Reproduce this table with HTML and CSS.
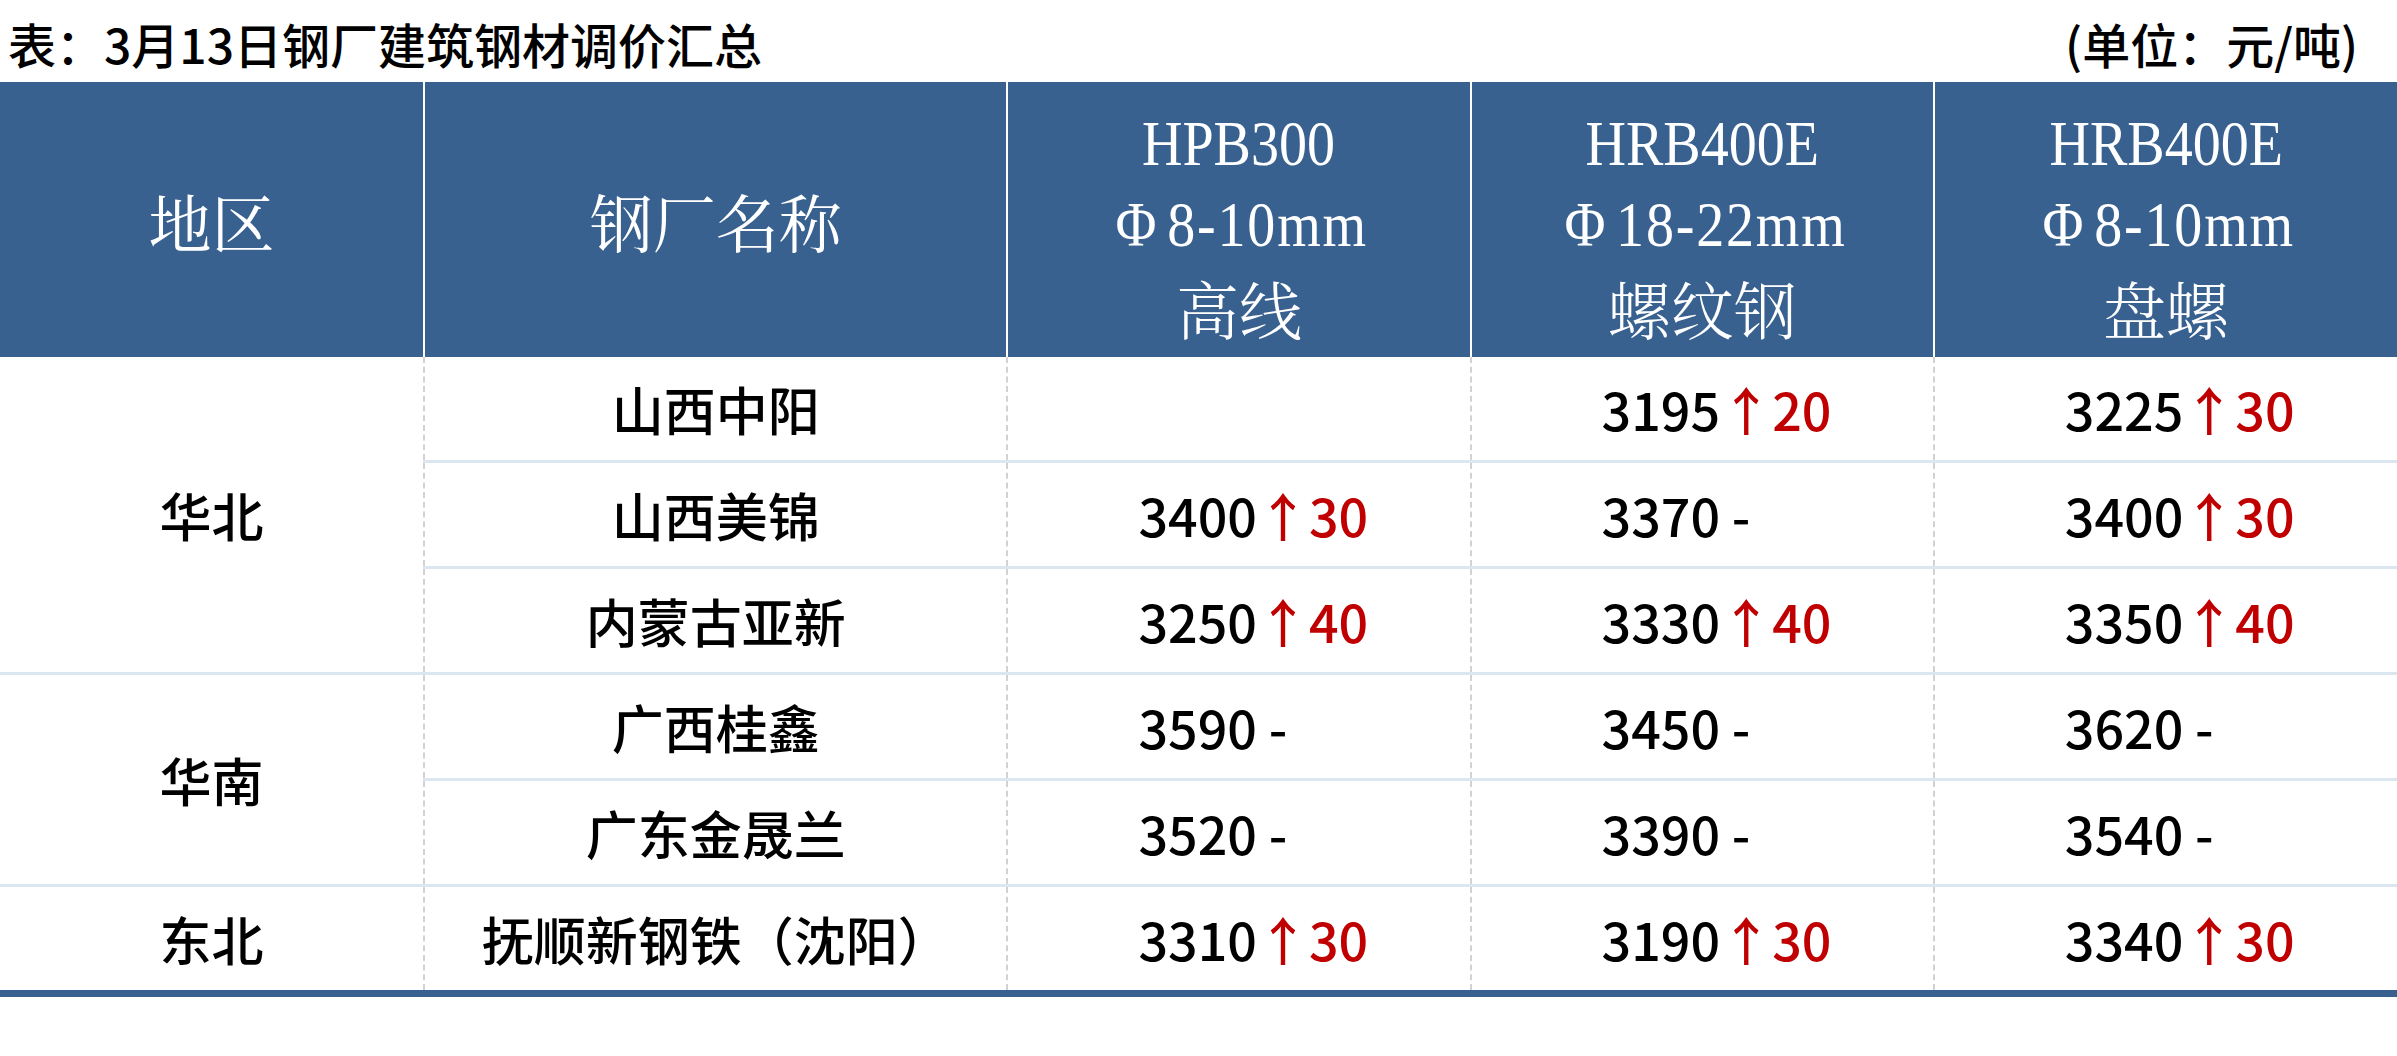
FILE: index.html
```html
<!DOCTYPE html>
<html lang="zh-CN">
<head>
<meta charset="utf-8">
<title>3月13日钢厂建筑钢材调价汇总</title>
<link rel="stylesheet" href="styles.css">
</head>
<body>
<div class="page">
  <div class="titlebar">
    <div class="title">表：3月13日钢厂建筑钢材调价汇总</div>
    <div class="unit">(单位：元/吨)</div>
  </div>
  <table class="grid">
    <colgroup>
      <col class="c-region">
      <col class="c-mill">
      <col class="c-price">
      <col class="c-price">
      <col class="c-price">
    </colgroup>
    <thead>
      <tr class="head">
        <th class="h-cjk">地区</th>
        <th class="h-cjk">钢厂名称</th>
        <th>
          <div class="hstack">
            <span class="hl lat"><span class="sq">HPB300</span></span>
            <span class="hl lat"><span class="sq spec"><span class="phi">Φ</span>8-10mm</span></span>
            <span class="hl cjk">高线</span>
          </div>
        </th>
        <th>
          <div class="hstack">
            <span class="hl lat"><span class="sq">HRB400E</span></span>
            <span class="hl lat"><span class="sq spec"><span class="phi">Φ</span>18-22mm</span></span>
            <span class="hl cjk">螺纹钢</span>
          </div>
        </th>
        <th>
          <div class="hstack">
            <span class="hl lat"><span class="sq">HRB400E</span></span>
            <span class="hl lat"><span class="sq spec"><span class="phi">Φ</span>8-10mm</span></span>
            <span class="hl cjk">盘螺</span>
          </div>
        </th>
      </tr>
    </thead>
    <tbody>
      <tr class="row group-start">
        <td class="region" rowspan="3">华北</td>
        <td class="mill">山西中阳</td>
        <td class="price"></td>
        <td class="price">3195<span class="up">↑20</span></td>
        <td class="price">3225<span class="up">↑30</span></td>
      </tr>
      <tr class="row">
        <td class="mill">山西美锦</td>
        <td class="price">3400<span class="up">↑30</span></td>
        <td class="price">3370 -</td>
        <td class="price">3400<span class="up">↑30</span></td>
      </tr>
      <tr class="row">
        <td class="mill">内蒙古亚新</td>
        <td class="price">3250<span class="up">↑40</span></td>
        <td class="price">3330<span class="up">↑40</span></td>
        <td class="price">3350<span class="up">↑40</span></td>
      </tr>
      <tr class="row group-start">
        <td class="region" rowspan="2">华南</td>
        <td class="mill">广西桂鑫</td>
        <td class="price">3590 -</td>
        <td class="price">3450 -</td>
        <td class="price">3620 -</td>
      </tr>
      <tr class="row">
        <td class="mill">广东金晟兰</td>
        <td class="price">3520 -</td>
        <td class="price">3390 -</td>
        <td class="price">3540 -</td>
      </tr>
      <tr class="row group-start last">
        <td class="region">东北</td>
        <td class="mill">抚顺新钢铁（沈阳）</td>
        <td class="price">3310<span class="up">↑30</span></td>
        <td class="price">3190<span class="up">↑30</span></td>
        <td class="price">3340<span class="up">↑30</span></td>
      </tr>
    </tbody>
  </table>
</div>
</body>
</html>
```
FILE: styles.css
```css
html, body {
  margin: 0;
  padding: 0;
  background: #ffffff;
}

.page {
  width: 2397px;
  font-family: "Noto Sans CJK SC", "Noto Sans", sans-serif;
  color: #000000;
}

.titlebar {
  height: 82px;
  display: flex;
  align-items: center;
  justify-content: space-between;
  padding: 4px 39px 0 8px;
  box-sizing: border-box;
  font-size: 48px;
  font-weight: 500;
  line-height: 60px;
}

.title, .unit {
  white-space: nowrap;
}

.grid {
  width: 2397px;
  border-collapse: collapse;
  table-layout: fixed;
}

.c-region { width: 424px; }
.c-mill { width: 583px; }
.c-price { width: 463px; }

.head th {
  height: 275px;
  padding: 0;
  background: #386190;
  color: #ffffff;
  font-weight: normal;
  border-left: 2px solid #ffffff;
  vertical-align: middle;
  text-align: center;
}

.head th:first-child {
  border-left: none;
}

.h-cjk {
  font-family: "Noto Serif CJK SC", "Noto Sans CJK SC", serif;
  font-size: 63px;
  font-weight: 300;
  line-height: 80px;
}

.hstack {
  display: flex;
  flex-direction: column;
  align-items: center;
  padding-top: 12px;
}

.hl {
  display: block;
  height: 81px;
  line-height: 81px;
  white-space: nowrap;
}

.lat {
  font-family: "Liberation Serif", "Times New Roman", serif;
  font-size: 63px;
}

.sq {
  display: inline-block;
  transform: scaleX(0.89);
}

.spec {
  letter-spacing: 2px;
  margin-left: 6px;
}

.phi {
  margin-right: 10px;
}

.cjk {
  font-family: "Noto Serif CJK SC", "Noto Sans CJK SC", serif;
  font-size: 63px;
  font-weight: 300;
}

.row td {
  height: 103px;
  padding: 0;
  border-top: 3px solid #dce6f0;
  border-left: 2px dashed #d2d2d2;
  font-size: 52px;
  font-weight: 500;
  line-height: 60px;
  vertical-align: middle;
  white-space: nowrap;
}

.row td.region {
  border-left: none;
  text-align: center;
}

.row td.mill {
  text-align: center;
}

.row td.price {
  text-align: left;
  padding-left: 130px;
}

tbody tr:first-child td {
  border-top: none;
}

.row.last td {
  border-bottom: 7px solid #386190;
}

.up {
  color: #c00000;
}
```
